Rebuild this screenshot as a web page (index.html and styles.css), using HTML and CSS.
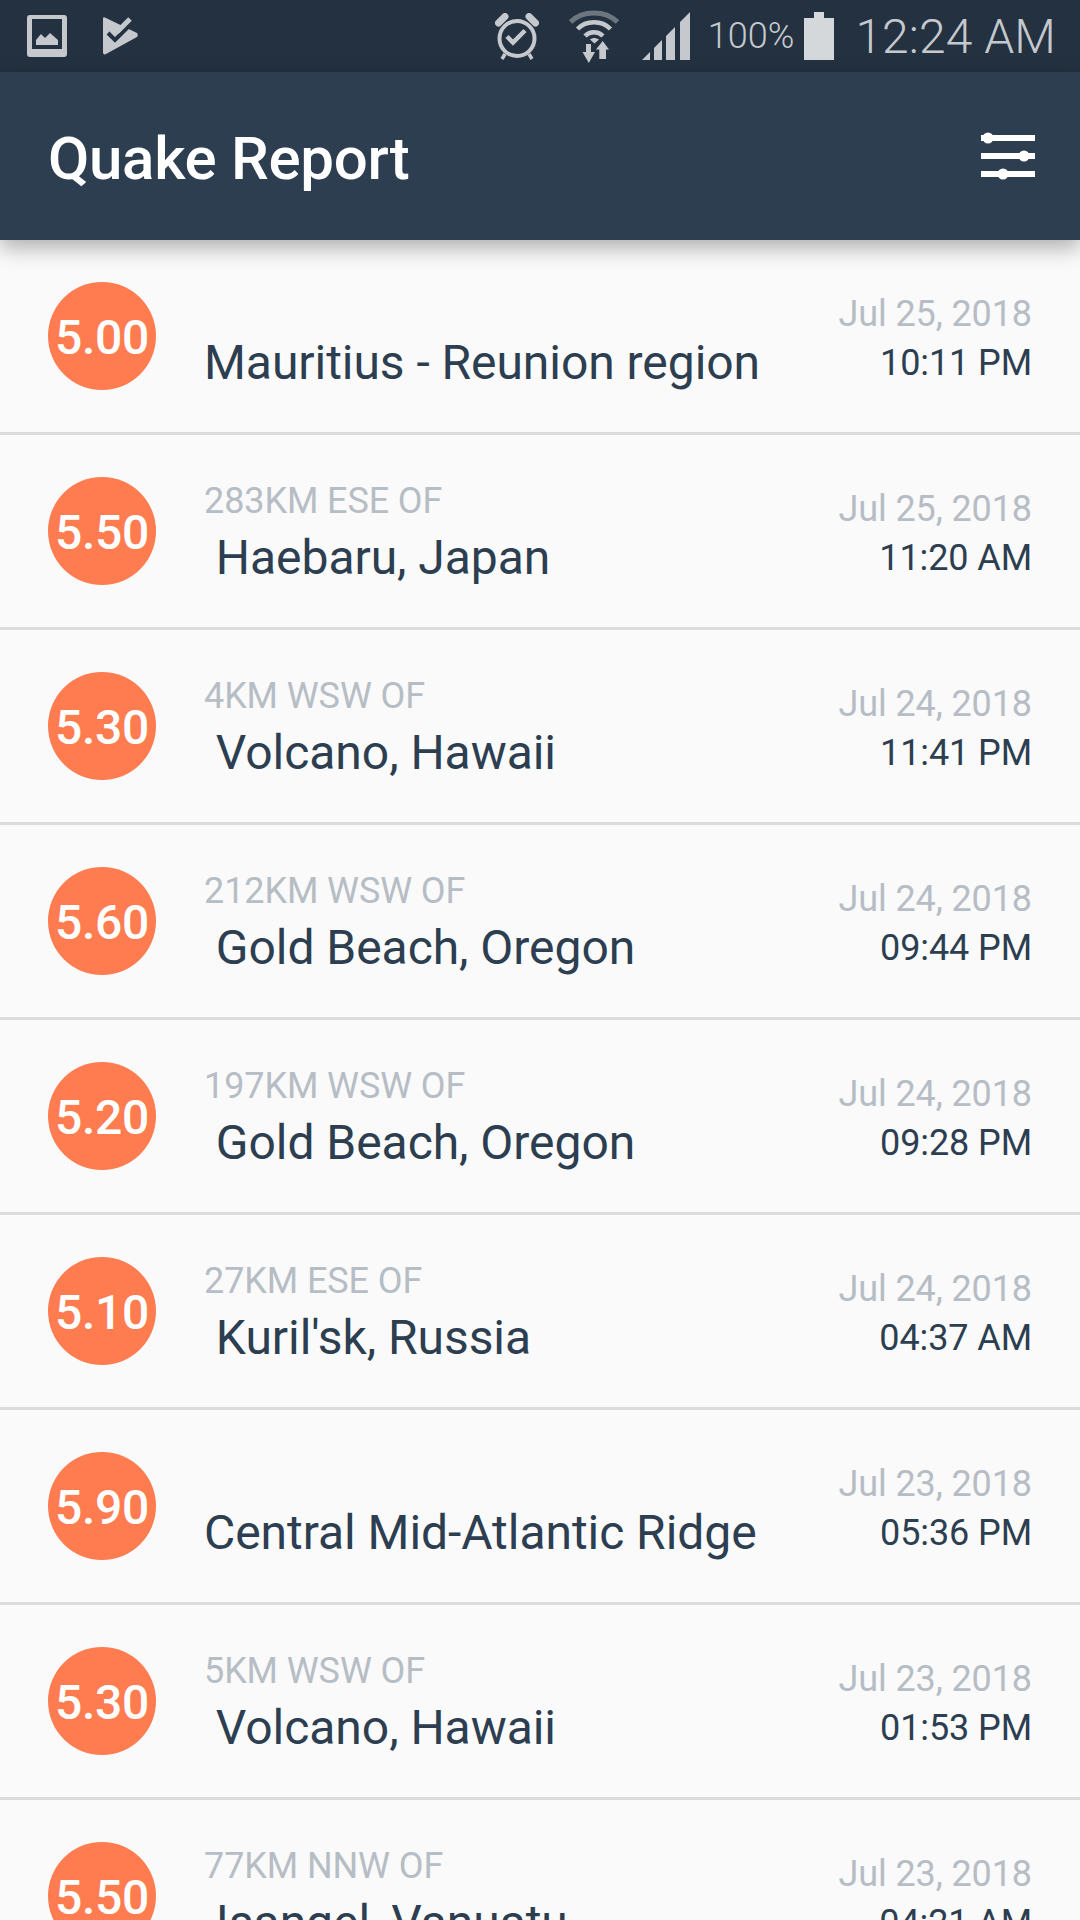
FILE: index.html
```html
<!DOCTYPE html>
<html lang="en">
<head>
    <meta charset="UTF-8">
    <meta name="viewport" content="width=device-width, initial-scale=1.0">
    <title>Quake Report</title>
    <link rel="stylesheet" href="styles.css">
</head>
<body>
    <div class="status-bar">
        <svg class="icon-picture" viewBox="0 0 40 42">
            <path fill="#c5c9ce" fill-rule="evenodd" d="M3 0h34a3 3 0 0 1 3 3v36a3 3 0 0 1-3 3H3a3 3 0 0 1-3-3V3a3 3 0 0 1 3-3zM5 4v30h30V4zM9 30v-5l5-6 4 4 5-5 8 7v5z"/>
        </svg>
        <svg class="icon-store" viewBox="0 0 36 38">
            <path fill="#c5c9ce" d="M1 2c0-2 1-2 3-1l31 15c1 1 1 3 0 4L4 37c-2 1-3 0-3-2z"/>
            <path fill="none" stroke="#233140" stroke-width="4" d="M6 16l7 7 20-20"/>
            <path fill="none" stroke="#233140" stroke-width="2" d="M30 0l6 8"/>
            <path fill="none" stroke="#c5c9ce" stroke-width="5" d="M15 15L28 2"/>
        </svg>
        <div class="status-right">
            <svg class="icon-alarm" viewBox="0 0 44 47">
                <circle cx="22" cy="25.5" r="17.5" fill="none" stroke="#c5c9ce" stroke-width="4"/>
                <path fill="none" stroke="#c5c9ce" stroke-width="4.5" d="M12 23.5l6 6 12-12"/>
                <path fill="none" stroke="#c5c9ce" stroke-width="3.5" d="M10 41l-3 5M34 41l3 5"/>
                <path fill="none" stroke="#c5c9ce" stroke-width="7" stroke-linecap="round" d="M3.5 10L10 3.5M40.5 10L34 3.5"/>
            </svg>
            <svg class="icon-wifi" viewBox="0 0 50 53">
                <path fill="none" stroke="#6c7680" stroke-width="5" d="M1.5 12C14 0 36 0 48.5 12"/>
                <path fill="none" stroke="#c5c9ce" stroke-width="4.5" d="M8.5 19C17 10 33 10 41.500 19M16 26c5-5 13-5 18 0"/>
                <path fill="#c5c9ce" d="M21 29.500c3-2 5-2 9 0l-4.500 4zM17 34h5v8h4l-6.200 11L13.500 42H17zM33.700 31l6.300 8.500h-3v9.500h-6.700v-9.500H27z"/>
            </svg>
            <svg class="icon-signal" viewBox="0 0 48 48">
                <path fill="#c5c9ce" d="M0 48l8-8v8zM12 36l8-8v20h-8zM24 24l9-9v33h-9zM38 10l10-10v48H38z"/>
            </svg>
            <span class="battery-text">100%</span>
            <svg class="icon-battery" viewBox="0 0 30 48">
                <path fill="#d5d8db" d="M10 0h10v6h10v42H0V6h10z"/>
            </svg>
            <span class="clock">12:24 AM</span>
        </div>
    </div>

    <div class="toolbar">
        <div class="toolbar-title">Quake Report</div>
        <svg class="icon-filter" viewBox="0 0 54 48">
            <g fill="#ffffff">
                <rect x="0" y="3" width="54" height="6"/>
                <rect x="0" y="21" width="54" height="6"/>
                <rect x="0" y="39" width="54" height="6"/>
                <circle cx="7" cy="6" r="5.5"/>
                <circle cx="43" cy="24" r="5.5"/>
                <circle cx="22" cy="42" r="5.5"/>
            </g>
        </svg>
    </div>

    <ul class="quake-list">
        <li class="quake-row">
            <div class="magnitude">5.00</div>
            <div class="location"><div class="offset"></div><div class="primary">Mauritius - Reunion region</div></div>
            <div class="when"><div class="date">Jul 25, 2018</div><div class="time">10:11 PM</div></div>
        </li>
        <li class="quake-row">
            <div class="magnitude">5.50</div>
            <div class="location"><div class="offset">283KM ESE OF</div><div class="primary"> Haebaru, Japan</div></div>
            <div class="when"><div class="date">Jul 25, 2018</div><div class="time">11:20 AM</div></div>
        </li>
        <li class="quake-row">
            <div class="magnitude">5.30</div>
            <div class="location"><div class="offset">4KM WSW OF</div><div class="primary"> Volcano, Hawaii</div></div>
            <div class="when"><div class="date">Jul 24, 2018</div><div class="time">11:41 PM</div></div>
        </li>
        <li class="quake-row">
            <div class="magnitude">5.60</div>
            <div class="location"><div class="offset">212KM WSW OF</div><div class="primary"> Gold Beach, Oregon</div></div>
            <div class="when"><div class="date">Jul 24, 2018</div><div class="time">09:44 PM</div></div>
        </li>
        <li class="quake-row">
            <div class="magnitude">5.20</div>
            <div class="location"><div class="offset">197KM WSW OF</div><div class="primary"> Gold Beach, Oregon</div></div>
            <div class="when"><div class="date">Jul 24, 2018</div><div class="time">09:28 PM</div></div>
        </li>
        <li class="quake-row">
            <div class="magnitude">5.10</div>
            <div class="location"><div class="offset">27KM ESE OF</div><div class="primary"> Kuril'sk, Russia</div></div>
            <div class="when"><div class="date">Jul 24, 2018</div><div class="time">04:37 AM</div></div>
        </li>
        <li class="quake-row">
            <div class="magnitude">5.90</div>
            <div class="location"><div class="offset"></div><div class="primary">Central Mid-Atlantic Ridge</div></div>
            <div class="when"><div class="date">Jul 23, 2018</div><div class="time">05:36 PM</div></div>
        </li>
        <li class="quake-row">
            <div class="magnitude">5.30</div>
            <div class="location"><div class="offset">5KM WSW OF</div><div class="primary"> Volcano, Hawaii</div></div>
            <div class="when"><div class="date">Jul 23, 2018</div><div class="time">01:53 PM</div></div>
        </li>
        <li class="quake-row">
            <div class="magnitude">5.50</div>
            <div class="location"><div class="offset">77KM NNW OF</div><div class="primary"> Isangel, Vanuatu</div></div>
            <div class="when"><div class="date">Jul 23, 2018</div><div class="time">04:21 AM</div></div>
        </li>
    </ul>
</body>
</html>
```

FILE: styles.css
```css
html, body {
    margin: 0;
    padding: 0;
    height: 1920px;
    overflow: hidden;
}

body {
    font-family: Roboto, "Liberation Sans", sans-serif;
    background-color: #fafafa;
}

.status-bar {
    height: 72px;
    display: flex;
    align-items: center;
    padding-left: 27px;
    background-color: #233140;
    color: #c5c9ce;
}

.icon-picture {
    width: 40px;
    height: 42px;
    margin-right: 35px;
}

.icon-store {
    width: 36px;
    height: 38px;
}

.status-right {
    margin-left: auto;
    padding-right: 24px;
    display: flex;
    align-items: center;
}

.icon-alarm {
    width: 44px;
    height: 47px;
    margin-right: 30px;
}

.icon-wifi {
    width: 50px;
    height: 53px;
    margin-right: 23px;
}

.icon-signal {
    width: 48px;
    height: 48px;
    margin-right: 18px;
}

.battery-text {
    font-size: 36px;
    font-weight: 300;
    margin-right: 10px;
}

.icon-battery {
    width: 30px;
    height: 48px;
    margin-right: 21px;
}

.clock {
    font-size: 48px;
    font-weight: 300;
    letter-spacing: 0.1px;
}

.toolbar {
    position: relative;
    height: 168px;
    display: flex;
    align-items: center;
    justify-content: space-between;
    padding: 0 45px 0 48px;
    background-color: #2c3e50;
    box-shadow: 0 8px 20px rgba(0,0,0,0.3);
}

.toolbar-title {
    margin-top: 5px;
    font-size: 60px;
    font-weight: 500;
    letter-spacing: -0.3px;
    color: white;
}

.icon-filter {
    width: 54px;
    height: 48px;
}

.quake-list {
    list-style: none;
    margin: 0;
    padding: 0;
}

.quake-row {
    height: 195px;
    box-sizing: border-box;
    display: flex;
    align-items: center;
    padding: 0 48px;
    border-bottom: 3px solid #dcdcdc;
}

.magnitude {
    width: 108px;
    height: 108px;
    box-sizing: border-box;
    padding-top: 2px;
    flex: none;
    display: flex;
    align-items: center;
    justify-content: center;
    border-radius: 50%;
    background-color: #ff7c50;
    color: white;
    font-size: 48px;
    font-weight: 500;
    letter-spacing: -0.3px;
}

.location {
    flex: 1;
    margin-left: 48px;
    padding-top: 4px;
}

.offset {
    height: 42px;
    line-height: 42px;
    font-size: 36px;
    letter-spacing: -0.1px;
    color: #b6bdc5;
    margin-bottom: 8px;
}

.primary {
    line-height: 56px;
    font-size: 48px;
    letter-spacing: -0.05px;
    color: #2c3e50;
    white-space: pre;
}

.when {
    padding-top: 5px;
    text-align: right;
    font-size: 36px;
    letter-spacing: -0.1px;
}

.date {
    line-height: 42px;
    color: #b6bdc5;
    margin-bottom: 7px;
}

.time {
    line-height: 42px;
    color: #2c3e50;
}
```
